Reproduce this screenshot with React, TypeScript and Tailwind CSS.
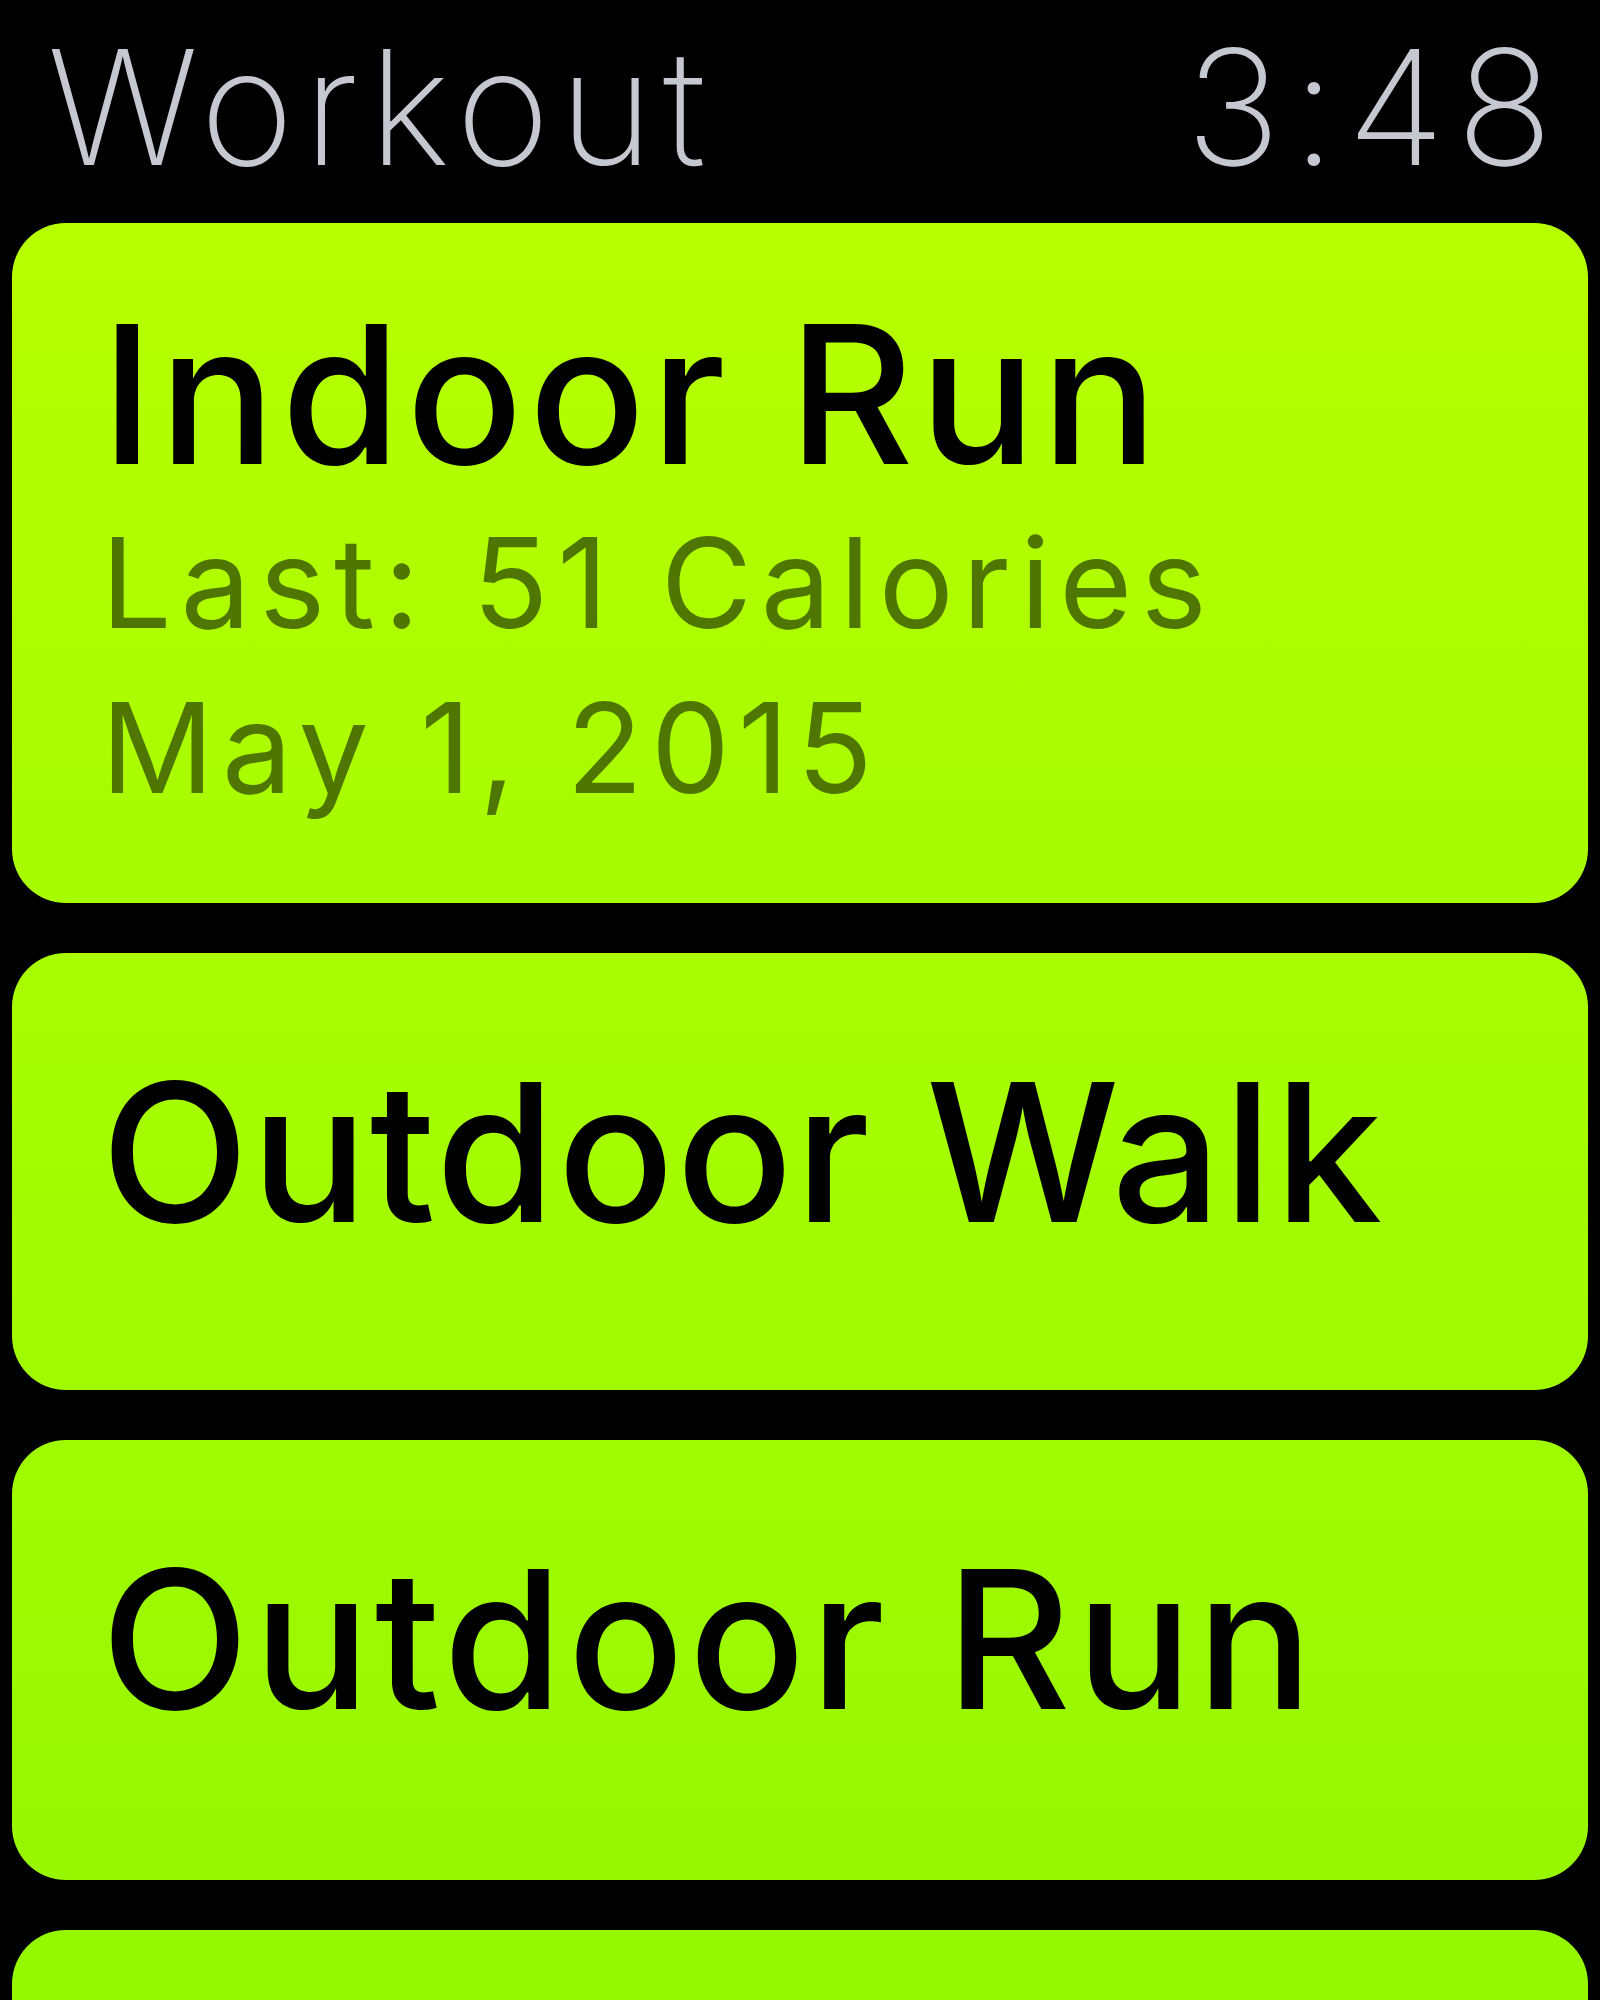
import React from 'react';

type Workout = {
  name: string;
  last?: string;
  date?: string;
  bg: string;
  track: string;
};

const workouts: Workout[] = [
  { name: 'Indoor Run', last: 'Last: 51 Calories', date: 'May 1, 2015', bg: 'bg-gradient-to-b from-[#b7ff00] to-[#a7fb00]', track: 'tracking-[0.03em]' },
  { name: 'Outdoor Walk', bg: 'bg-gradient-to-b from-[#a9fd00] to-[#a0fa00]', track: 'tracking-[0.012em]' },
  { name: 'Outdoor Run', bg: 'bg-gradient-to-b from-[#a0fb00] to-[#97f600]', track: 'tracking-[0.025em]' },
  { name: '', bg: 'bg-gradient-to-b from-[#95f700] to-[#93f600]', track: '' },
];

function WorkoutCard({ w, index }: { w: Workout; index: number }) {
  // first card carries the "last session" details
  if (w.last) {
    return (
      <div className={`rounded-[54px] ${w.bg} pl-[89px] pt-[75px] pb-[73px]`}>
        <div className={`text-[193px] leading-[193px] font-medium text-black ${w.track}`}>{w.name}</div>
        <div className="mt-[9px] text-[125px] leading-[165px] text-[#4e7600] tracking-[0.07em]">{w.last}</div>
        <div className="text-[125px] leading-[165px] text-[#4e7600] tracking-[0.065em]">{w.date}</div>
      </div>
    );
  }

  const height = index === 1 ? 'h-[437px]' : index === 2 ? 'h-[440px]' : 'h-[300px]';
  return (
    <div className={`rounded-[54px] ${w.bg} ${height} pl-[89px] pt-[103px]`}>
      {w.name && (
        <div className={`text-[193px] leading-[193px] font-medium text-black ${w.track}`}>{w.name}</div>
      )}
    </div>
  );
}

export default function App() {
  return (
    <div
      className="w-[1600px] h-[2000px] bg-black overflow-hidden"
      style={{ fontFamily: 'Inter, "Noto Sans", sans-serif' }}
    >
      <div className="flex justify-between items-start pl-[47px] pr-[36px] pt-[27px] h-[223px]">
        <span className="text-[160px] leading-[160px] font-extralight text-[#c5c8d1] tracking-[0.06em]">Workout</span>
        <span className="text-[160px] leading-[160px] font-extralight text-[#c5c8d1] tracking-[0.07em]">3:48</span>
      </div>
      <div className="flex flex-col gap-[50px] px-[12px]">
        {workouts.map((w, i) => (
          <WorkoutCard key={i} w={w} index={i} />
        ))}
      </div>
    </div>
  );
}
